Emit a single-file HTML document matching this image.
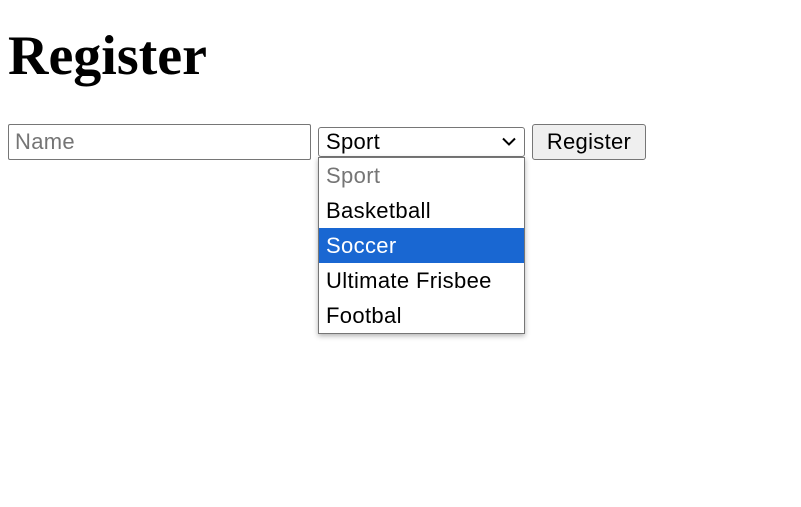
<!DOCTYPE html>
<html><head><style>
body{margin:0;width:801px;height:507px;background:#fff;position:relative;font-family:"Liberation Sans",Arial,sans-serif;overflow:hidden}
h1{position:absolute;left:8px;top:22px;margin:0;font-family:"Liberation Serif",serif;font-size:56px;font-weight:bold;line-height:68px}
.inp{position:absolute;left:8px;top:124px;width:301px;height:34px;border:1px solid #767676;border-radius:2px;box-sizing:content-box}
.inp span{position:absolute;left:6px;top:4px;font-size:22px;color:#757575;line-height:26px;letter-spacing:0.3px}
.sel{position:absolute;left:318px;top:127px;width:205px;height:28px;border:1px solid #767676;border-radius:3px}
.sel span{position:absolute;left:7px;top:1px;font-size:22px;line-height:26px;letter-spacing:0.3px}
.sel svg{position:absolute;right:8px;top:9px}
.btn{position:absolute;left:532px;top:124px;width:112px;height:34px;border:1px solid #767676;border-radius:3px;background:#efefef;font-size:22px;text-align:center;line-height:34px;letter-spacing:0.3px}
.dd{position:absolute;left:318px;top:157px;width:205px;height:175px;border:1px solid #767676;background:#fff;box-shadow:0 2px 5px rgba(0,0,0,.3)}
.dd div{height:35px;line-height:35px;padding-left:7px;font-size:22px;letter-spacing:0.35px}
.hl{background:#1967d2;color:#fff}
</style></head><body>
<h1>Register</h1>
<div class="inp"><span>Name</span></div>
<div class="sel"><span>Sport</span><svg width="14" height="9" viewBox="0 0 14 9"><path d="M1 1.5L7 7.5L13 1.5" fill="none" stroke="#000" stroke-width="2"/></svg></div>
<div class="btn">Register</div>
<div class="dd">
<div style="color:#757575">Sport</div>
<div>Basketball</div>
<div class="hl">Soccer</div>
<div>Ultimate Frisbee</div>
<div>Footbal</div>
</div>
</body></html>
